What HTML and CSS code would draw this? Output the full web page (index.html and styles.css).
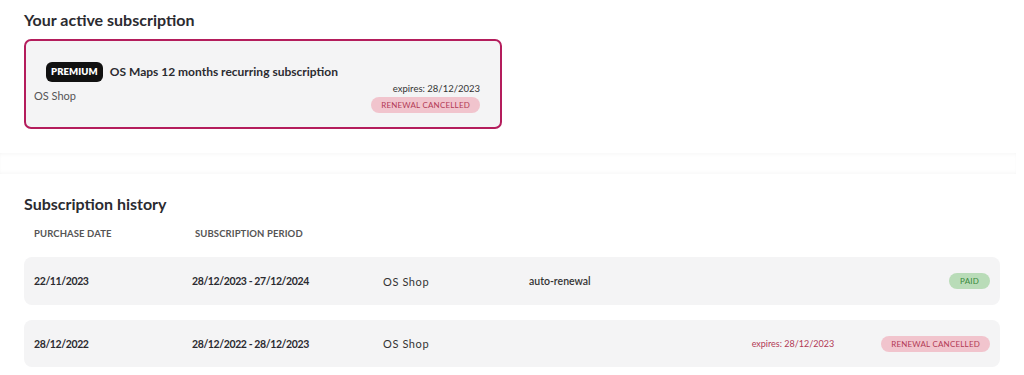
FILE: index.html
```html
<!DOCTYPE html>
<html lang="en">
<head>
<meta charset="utf-8">
<title>Subscriptions</title>
<link rel="stylesheet" href="styles.css">
</head>
<body>
<section class="active">
  <h2 class="heading">Your active subscription</h2>
  <div class="card">
    <div class="card-main">
      <div class="card-title-row">
        <span class="tier">PREMIUM</span>
        <span class="card-title">OS Maps 12 months recurring subscription</span>
      </div>
      <div class="card-shop">OS Shop</div>
    </div>
    <div class="card-side">
      <div class="card-expires">expires: 28/12/2023</div>
      <span class="pill pill-cancel">RENEWAL CANCELLED</span>
    </div>
  </div>
</section>
<div class="divider"></div>
<section class="history">
  <h2 class="heading">Subscription history</h2>
  <div class="cols">
    <span class="col-h">PURCHASE DATE</span>
    <span class="col-h col-h2">SUBSCRIPTION PERIOD</span>
  </div>
  <div class="row">
    <span class="c-date">22/11/2023</span>
    <span class="c-period">28/12/2023 - 27/12/2024</span>
    <span class="c-shop">OS Shop</span>
    <span class="c-type">auto-renewal</span>
    <span class="c-end">
      <span class="pill pill-paid">PAID</span>
    </span>
  </div>
  <div class="row">
    <span class="c-date">28/12/2022</span>
    <span class="c-period">28/12/2022 - 28/12/2023</span>
    <span class="c-shop">OS Shop</span>
    <span class="c-type"></span>
    <span class="c-end">
      <span class="row-expires">expires: 28/12/2023</span>
      <span class="pill pill-cancel pill-wide">RENEWAL CANCELLED</span>
    </span>
  </div>
</section>
</body>
</html>
```

FILE: styles.css
```css
* { box-sizing: border-box; }
body {
  margin: 0;
  background: #fff;
  font-family: Lato, "Open Sans", sans-serif;
  color: #2f2f33;
}
.heading {
  margin: 0;
  font-size: 16px;
  line-height: 24px;
  font-weight: 700;
  color: #2b2b30;
}
.active {
  padding: 8px 24px 0;
}
.card {
  margin-top: 7px;
  width: 478px;
  height: 90px;
  border: 2px solid #b41d5c;
  border-radius: 7px;
  background: #f4f4f5;
  display: flex;
  justify-content: space-between;
  padding: 21px 20px 14px 8px;
}
.card-main { display: flex; flex-direction: column; }
.card-title-row {
  display: flex;
  align-items: center;
  gap: 7px;
  margin-left: 12px;
}
.tier {
  background: #111;
  color: #fff;
  font-size: 9.5px;
  font-weight: 800;
  height: 20px;
  line-height: 20px;
  padding: 0 5px;
  border-radius: 6px;
  letter-spacing: 0.1px;
}
.card-title {
  font-size: 12px;
  font-weight: 700;
  color: #2b2b30;
  margin-top: -2px;
}
.card-shop {
  margin-top: 7px;
  font-size: 11px;
  color: #555;
}
.card-side {
  display: flex;
  flex-direction: column;
  align-items: flex-end;
  justify-content: flex-end;
  gap: 3px;
}
.card-expires {
  font-size: 9.5px;
  color: #333;
}
.pill {
  display: inline-block;
  height: 16px;
  line-height: 16px;
  border-radius: 8px;
  font-size: 8px;
  padding: 0 10px;
  letter-spacing: 0.2px;
}
.pill-cancel { background: #f1c4cd; color: #b23a55; }
.pill-wide { padding: 0 10px; font-size: 8px; }
.pill-paid { background: #b9dcb8; color: #3a8a3c; padding: 0 11px; }
.divider {
  margin-top: 24px;
  height: 21px;
  background: #fff;
  box-shadow: inset 0 3px 4px -2px rgba(0,0,0,0.04), inset 0 -3px 4px -2px rgba(0,0,0,0.04);
  margin-right: 8px;
}
.history {
  padding: 18px 24px 0;
}
.cols {
  display: grid;
  grid-template-columns: 161px 200px;
  padding: 12px 10px 0;
  height: 41px;
}
.col-h {
  font-size: 9.5px;
  font-weight: 700;
  color: #555;
  letter-spacing: 0.1px;
}
.row {
  width: 976px;
  height: 48px;
  margin-bottom: 15px;
  background: #f4f4f5;
  border-radius: 8px;
  display: grid;
  grid-template-columns: 158px 191px 146px 1fr auto;
  align-items: center;
  padding: 0 10px;
  font-size: 11px;
}
.row + .row { height: 47px; }
.c-date, .c-period {
  font-size: 10.5px;
  letter-spacing: -0.4px;
  font-weight: 700;
  color: #2b2b30;
}
.c-shop { color: #333; font-weight: 400; font-size: 11px; letter-spacing: 0.6px; }
.c-type { font-size: 10.5px; font-weight: 600; color: #333; }
.c-end {
  display: flex;
  align-items: center;
  gap: 47px;
}
.row-expires {
  font-size: 9px;
  color: #b23a55;
}
```
